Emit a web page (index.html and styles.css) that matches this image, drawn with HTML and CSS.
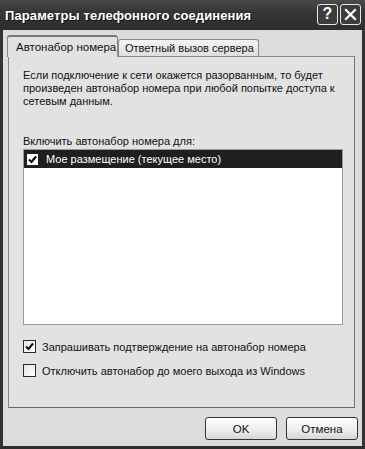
FILE: index.html
```html
<!DOCTYPE html>
<html lang="ru">
<head>
<meta charset="utf-8">
<title>Параметры телефонного соединения</title>
<link rel="stylesheet" href="styles.css">
</head>
<body>
<div class="window">
  <div class="titlebar">
    <span class="title">Параметры телефонного соединения</span>
    <div class="tbtns">
      <span class="tbtn help">?</span>
      <span class="tbtn close">
        <svg width="13" height="13" viewBox="0 0 13 13"><path d="M2 2 L11 11 M11 2 L2 11" stroke="#fff" stroke-width="2.2" stroke-linecap="square"/></svg>
      </span>
    </div>
  </div>
  <div class="content">
    <div class="tabs">
      <div class="tab active">Автонабор номера</div>
      <div class="tab">Ответный вызов сервера</div>
    </div>
    <div class="panel">
      <p class="desc">Если подключение к сети окажется разорванным, то будет произведен автонабор номера при любой попытке доступа к сетевым данным.</p>
      <div class="label">Включить автонабор номера для:</div>
      <div class="list">
        <div class="row selected">
          <span class="lcheck"><svg width="9" height="9" viewBox="0 0 9 9"><path d="M1 4.5 L3.5 7 L8 1.5" fill="none" stroke="#000" stroke-width="2"/></svg></span>
          <span>Мое размещение (текущее место)</span>
        </div>
      </div>
      <div class="opt first">
        <span class="cbox"><svg width="9" height="9" viewBox="0 0 9 9"><path d="M1 4.5 L3.5 7 L8 1.5" fill="none" stroke="#111" stroke-width="2"/></svg></span>
        <span>Запрашивать подтверждение на автонабор номера</span>
      </div>
      <div class="opt">
        <span class="cbox"></span>
        <span>Отключить автонабор до моего выхода из Windows</span>
      </div>
    </div>
    <div class="buttons">
      <button class="btn">OK</button>
      <button class="btn">Отмена</button>
    </div>
  </div>
</div>
</body>
</html>
```
FILE: styles.css
```css
* { box-sizing: border-box; }
html, body { margin: 0; padding: 0; background: #dcdcdc; }
body { font-family: "Liberation Sans", Arial, sans-serif; font-size: 11px; color: #111; }

.window {
  width: 365px;
  height: 449px;
  display: flex;
  flex-direction: column;
  background: #dcdcdc;
  border-left: 3px solid #333;
  border-right: 3px solid #333;
  border-bottom: 3px solid #2c2c2c;
}

.titlebar {
  height: 30px;
  margin: 0 -3px;
  padding: 0 4px 0 5px;
  display: flex;
  align-items: center;
  justify-content: space-between;
  background: linear-gradient(#4a4a4a, #353535 40%, #2e2e2e);
}
.title {
  color: #fff;
  font-weight: bold;
  font-size: 13px;
  letter-spacing: 0.1px;
  text-shadow: 1px 1px 0 #111;
}
.tbtns { display: flex; gap: 2px; margin-top: -2px; }
.tbtn {
  width: 21px;
  height: 21px;
  border: 1px solid #e8e8e8;
  border-radius: 3px;
  background: #3c3c3c;
  color: #fff;
  display: flex;
  align-items: center;
  justify-content: center;
  font-weight: bold;
  font-size: 16px;
}

.content {
  flex: 1;
  display: flex;
  flex-direction: column;
}

.tabs {
  display: flex;
  align-items: flex-end;
  margin-top: 5px;
  padding-left: 4px;
  height: 21px;
}
.tab {
  height: 17px;
  padding: 0 4px 0 6px;
  border: 1px solid #888;
  border-bottom: none;
  border-radius: 3px 3px 0 0;
  background: linear-gradient(#f4f4f4, #dedede);
  display: flex;
  align-items: center;
  font-size: 11px;
  white-space: nowrap;
}
.tab.active {
  height: 22px;
  margin-bottom: -1px;
  width: 111px;
  padding: 0 0 0 8px;
  background: #e2e2e2;
  border-top: 2px solid #777;
  position: relative;
  z-index: 1;
  font-size: 11.5px;
}

.panel {
  margin-left: 5px;
  width: 347px;
  height: 352px;
  border: 1px solid #888;
  border-right-color: #777;
  border-bottom-color: #666;
  background: #e2e2e2;
  padding: 12px 11px 0 14px;
  display: flex;
  flex-direction: column;
}
.desc {
  margin: 0;
  line-height: 13px;
  width: 315px;
}
.label {
  margin-top: 27px;
  line-height: 13px;
}
.list {
  margin-top: 1px;
  width: 320px;
  height: 176px;
  border: 1px solid #9a9a9a;
  background: #fff;
}
.row {
  height: 18px;
  display: flex;
  align-items: center;
  padding-left: 3px;
}
.row.selected { background: #1f1f1f; color: #fff; }
.lcheck {
  width: 11px;
  height: 11px;
  background: #fff;
  display: flex;
  align-items: center;
  justify-content: center;
  margin-right: 8px;
}

.opt {
  display: flex;
  align-items: center;
  height: 13px;
  margin-top: 11px;
}
.opt.first { margin-top: 15px; }
.cbox {
  width: 13px;
  height: 13px;
  border: 1px solid #2a2a2a;
  background: linear-gradient(135deg, #e6e6e6, #ffffff);
  display: flex;
  align-items: center;
  justify-content: center;
  margin-right: 6px;
}

.buttons {
  display: flex;
  justify-content: flex-end;
  gap: 9px;
  margin-top: 9px;
  padding-right: 4px;
}
.btn {
  width: 72px;
  height: 23px;
  border: 1px solid #333;
  border-radius: 3px;
  background: linear-gradient(#ffffff, #ececec 60%, #d6d6d6);
  font-family: "Liberation Sans", Arial, sans-serif;
  font-size: 11.5px;
  color: #111;
  padding: 0;
}
```
